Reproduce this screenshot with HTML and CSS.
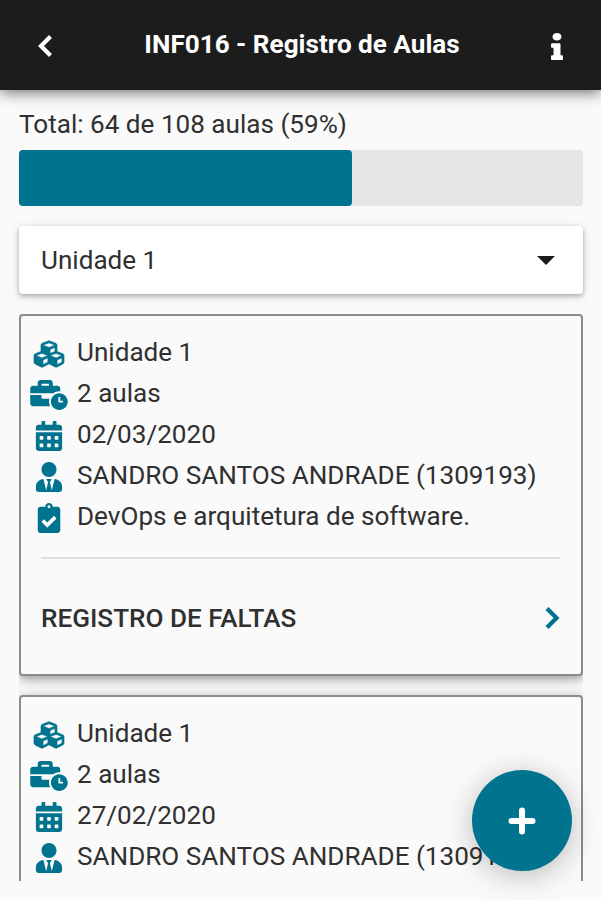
FILE: index.html
```html
<!DOCTYPE html>
<html lang="pt-BR">

<head>
  <meta charset="UTF-8">
  <meta name="viewport" content="width=device-width, initial-scale=1.0">
  <title>INF016 - Registro de Aulas</title>
  <link rel="stylesheet" href="styles.css">
</head>

<body>
  <svg class="sprite">
    <symbol id="cubes" viewBox="0 0 512 512">
      <path stroke="#00738e" stroke-width="12" d="M488.6 250.2L392 214V105.5c0-15-9.3-28.4-23.4-33.7l-100-37.5c-8.1-3.1-17.1-3.1-25.3 0l-100 37.5c-14.1 5.3-23.4 18.7-23.4 33.7V214l-96.6 36.2C9.3 255.5 0 268.9 0 283.9V394c0 13.6 7.7 26.1 19.9 32.2l100 50c10.1 5.1 22.1 5.1 32.2 0l103.9-52 103.9 52c10.1 5.1 22.1 5.1 32.2 0l100-50c12.2-6.1 19.9-18.6 19.9-32.2V283.9c0-15-9.3-28.4-23.4-33.7zM358 214.8l-85 31.9v-68.2l85-37v73.3zM154 104.1l102-38.2 102 38.2v.6l-102 41.4-102-41.4v-.6zm84 291.1l-85 42.5v-79.1l85-38.8v75.4zm0-112l-102 41.4-102-41.4v-.6l102-38.2 102 38.2v.6zm240 112l-85 42.5v-79.1l85-38.8v75.4zm0-112l-102 41.4-102-41.4v-.6l102-38.2 102 38.2v.6z"/>
    </symbol>
    <symbol id="business-time" viewBox="0 0 640 512">
      <path d="M496 224c-79.59 0-144 64.41-144 144s64.41 144 144 144 144-64.41 144-144-64.41-144-144-144zm64 150.29c0 5.34-4.37 9.71-9.71 9.71h-60.57c-5.34 0-9.71-4.37-9.71-9.71v-76.57c0-5.34 4.37-9.71 9.71-9.71h12.57c5.34 0 9.71 4.37 9.71 9.71V352h38.29c5.34 0 9.71 4.37 9.71 9.71v12.58zM496 192c5.4 0 10.72.33 16 .81V144c0-25.6-22.4-48-48-48h-80V48c0-25.6-22.4-48-48-48H176c-25.6 0-48 22.4-48 48v48H48c-25.6 0-48 22.4-48 48v80h395.12c28.6-20.09 63.35-32 100.88-32zM320 96H192V64h128v32zm6.82 224H208c-8.84 0-16-7.16-16-16v-48H0v144c0 25.6 22.4 48 48 48h291.43C327.1 423.96 320 396.82 320 368c0-16.66 2.48-32.72 6.82-48z"/>
    </symbol>
    <symbol id="calendar" viewBox="0 0 448 512">
      <path fill-rule="evenodd" d="M0 192h448v272c0 26.500-21.500 48-48 48H48c-26.500 0-48-21.500-48-48zM76 256a12 12 0 0 0-12 12v40a12 12 0 0 0 12 12h40a12 12 0 0 0 12-12v-40a12 12 0 0 0-12-12zM204 256a12 12 0 0 0-12 12v40a12 12 0 0 0 12 12h40a12 12 0 0 0 12-12v-40a12 12 0 0 0-12-12zM332 256a12 12 0 0 0-12 12v40a12 12 0 0 0 12 12h40a12 12 0 0 0 12-12v-40a12 12 0 0 0-12-12zM76 384a12 12 0 0 0-12 12v40a12 12 0 0 0 12 12h40a12 12 0 0 0 12-12v-40a12 12 0 0 0-12-12zM204 384a12 12 0 0 0-12 12v40a12 12 0 0 0 12 12h40a12 12 0 0 0 12-12v-40a12 12 0 0 0-12-12zM332 384a12 12 0 0 0-12 12v40a12 12 0 0 0 12 12h40a12 12 0 0 0 12-12v-40a12 12 0 0 0-12-12z"/>
      <path d="M400 64h-48V16c0-8.800-7.200-16-16-16h-32c-8.800 0-16 7.200-16 16v48H160V16c0-8.800-7.200-16-16-16h-32c-8.800 0-16 7.200-16 16v48H48C21.500 64 0 85.500 0 112v48h448v-48c0-26.500-21.500-48-48-48z"/>
    </symbol>
    <symbol id="user-tie" viewBox="0 0 448 512">
      <path d="M224 256c70.7 0 128-57.3 128-128S294.7 0 224 0 96 57.3 96 128s57.3 128 128 128zm95.8 32.6L272 480l-32-136 32-56h-96l32 56-32 136-47.8-191.4C56.9 292 0 350.3 0 422.4V464c0 26.5 21.5 48 48 48h352c26.5 0 48-21.5 48-48v-41.6c0-72.1-56.9-130.4-128.2-133.8z"/>
    </symbol>
    <symbol id="clipboard-check" viewBox="0 0 384 512">
      <path d="M336 64h-80c0-35.3-28.7-64-64-64s-64 28.7-64 64H48C21.5 64 0 85.5 0 112v352c0 26.5 21.5 48 48 48h288c26.5 0 48-21.5 48-48V112c0-26.5-21.5-48-48-48zM192 40c13.3 0 24 10.7 24 24s-10.7 24-24 24-24-10.7-24-24 10.7-24 24-24zm121.2 231.8l-143 141.8c-4.7 4.7-12.3 4.6-17-.1l-82.6-83.3c-4.7-4.7-4.6-12.3.1-17L99.1 285c4.7-4.7 12.3-4.6 17 .1l46 46.4 106-105.2c4.7-4.7 12.3-4.6 17 .1l28.2 28.4c4.7 4.8 4.6 12.3-.1 17z"/>
    </symbol>
  </svg>

  <header class="header">
    <svg class="back" viewBox="0 0 16 24"><path d="M13.500 2.500 4 12l9.500 9.500"/></svg>
    <h1>INF016 - Registro de Aulas</h1>
    <svg class="info" viewBox="0 0 192 512" preserveAspectRatio="none">
      <path d="M20 424.229h20V279.771H20c-11.046 0-20-8.954-20-20V212c0-11.046 8.954-20 20-20h112c11.046 0 20 8.954 20 20v212.229h20c11.046 0 20 8.954 20 20V492c0 11.046-8.954 20-20 20H20c-11.046 0-20-8.954-20-20v-47.771c0-11.046 8.954-20 20-20zM96 0C56.235 0 24 32.235 24 72s32.235 72 72 72 72-32.235 72-72S135.764 0 96 0z"/>
    </svg>
  </header>

  <main class="content">
    <p class="total">Total: 64 de 108 aulas (59%)</p>
    <div class="progress">
      <div class="progress-bar" style="width:59%"></div>
    </div>

    <div class="select">
      <span>Unidade 1</span>
      <svg class="caret" viewBox="0 0 18 9"><path d="M0 0h18L9 9z"/></svg>
    </div>

    <div class="list">
      <div class="card">
        <ul class="details">
          <li><svg class="icon"><use href="#cubes"/></svg><span>Unidade 1</span></li>
          <li><svg class="icon"><use href="#business-time"/></svg><span>2 aulas</span></li>
          <li><svg class="icon"><use href="#calendar"/></svg><span>02/03/2020</span></li>
          <li><svg class="icon"><use href="#user-tie"/></svg><span>SANDRO SANTOS ANDRADE (1309193)</span></li>
          <li><svg class="icon"><use href="#clipboard-check"/></svg><span>DevOps e arquitetura de software.</span></li>
        </ul>
        <div class="absences">
          <span>REGISTRO DE FALTAS</span>
          <svg class="next" viewBox="0 0 16 24"><path d="M3 2.500 12.500 12 3 21.500"/></svg>
        </div>
      </div>

      <div class="card">
        <ul class="details">
          <li><svg class="icon"><use href="#cubes"/></svg><span>Unidade 1</span></li>
          <li><svg class="icon"><use href="#business-time"/></svg><span>2 aulas</span></li>
          <li><svg class="icon"><use href="#calendar"/></svg><span>27/02/2020</span></li>
          <li><svg class="icon"><use href="#user-tie"/></svg><span>SANDRO SANTOS ANDRADE (1309193)</span></li>
        </ul>
      </div>
    </div>
  </main>

  <button class="fab" aria-label="Adicionar">
    <svg viewBox="0 0 28 28"><path d="M14 3.500v21M3.500 14h21"/></svg>
  </button>
</body>

</html>
```

FILE: styles.css
```css
* {
  padding: 0;
  margin: 0;
  box-sizing: border-box;
}

body {
  height: 100vh;
  display: flex;
  flex-direction: column;
  overflow: hidden;
  background-color: #fafafa;
  color: #303030;
  font-family: Roboto, "Liberation Sans", sans-serif;
  font-size: 26.1px;
}

.sprite {
  display: none;
}

.header {
  height: 90px;
  flex-shrink: 0;
  display: flex;
  align-items: center;
  justify-content: space-between;
  padding: 0 38px 0 37px;
  background-color: #1c1c1c;
  color: #fff;
  box-shadow: 0 2px 14px rgba(0, 0, 0, 0.6);
}

.header h1 {
  font-size: 26.1px;
  font-weight: 700;
  line-height: 30px;
  padding-bottom: 2px;
}

.back,
.next {
  width: 16px;
  height: 24px;
  fill: none;
  stroke: currentColor;
  stroke-width: 4.2;
}

.back {
  margin-top: 2px;
}

.info {
  width: 12px;
  height: 27px;
  margin-top: 2px;
  fill: currentColor;
}

.content {
  flex: 1;
  min-height: 0;
  display: flex;
  flex-direction: column;
  padding: 19px 18px 19px 19px;
}

.total {
  line-height: 31px;
  margin-bottom: 10px;
}

.progress {
  height: 56px;
  flex-shrink: 0;
  margin-bottom: 20px;
  border-radius: 4px;
  background-color: #e6e6e6;
}

.progress-bar {
  height: 100%;
  border-radius: 4px;
  background-color: #00738e;
}

.select {
  height: 68px;
  flex-shrink: 0;
  display: flex;
  align-items: center;
  justify-content: space-between;
  margin-bottom: 20px;
  padding: 0 28px 0 22px;
  border-radius: 4px;
  background-color: #fff;
  box-shadow: 0 2px 5px rgba(0, 0, 0, 0.3), 0 2px 14px rgba(0, 0, 0, 0.08);
}

.caret {
  width: 18px;
  height: 9px;
  margin-top: 1px;
  fill: #1c1c1c;
}

.list {
  flex: 1;
  overflow: hidden;
}

.card {
  height: 362px;
  margin-bottom: 19px;
  padding: 15px 21px 0 9px;
  border: 2px solid #8c8c8c;
  border-radius: 4px;
  background-color: #fafafa;
  box-shadow: 0 3px 8px rgba(0, 0, 0, 0.3), 0 4px 20px rgba(0, 0, 0, 0.12);
}

.details {
  list-style: none;
}

.details li {
  height: 41px;
  display: flex;
  align-items: center;
  white-space: nowrap;
}

.icon {
  width: 38px;
  height: 30px;
  margin: 4px 9px 0 0;
  fill: #00738e;
}

.absences {
  height: 119px;
  display: flex;
  align-items: center;
  justify-content: space-between;
  margin: 21px 0 0 11px;
  border-top: 2px solid #dedede;
  font-weight: 500;
}

.next {
  color: #00738e;
}

/* botão flutuante */
.fab {
  position: absolute;
  right: 29px;
  bottom: 29px;
  width: 100px;
  height: 101px;
  display: flex;
  align-items: center;
  justify-content: center;
  border: none;
  border-radius: 50%;
  background-color: #00738e;
  box-shadow: 0 5px 30px rgba(0, 0, 0, 0.25);
}

.fab svg {
  width: 28px;
  height: 28px;
  stroke: #fff;
  stroke-width: 6;
  stroke-linecap: round;
}
```
